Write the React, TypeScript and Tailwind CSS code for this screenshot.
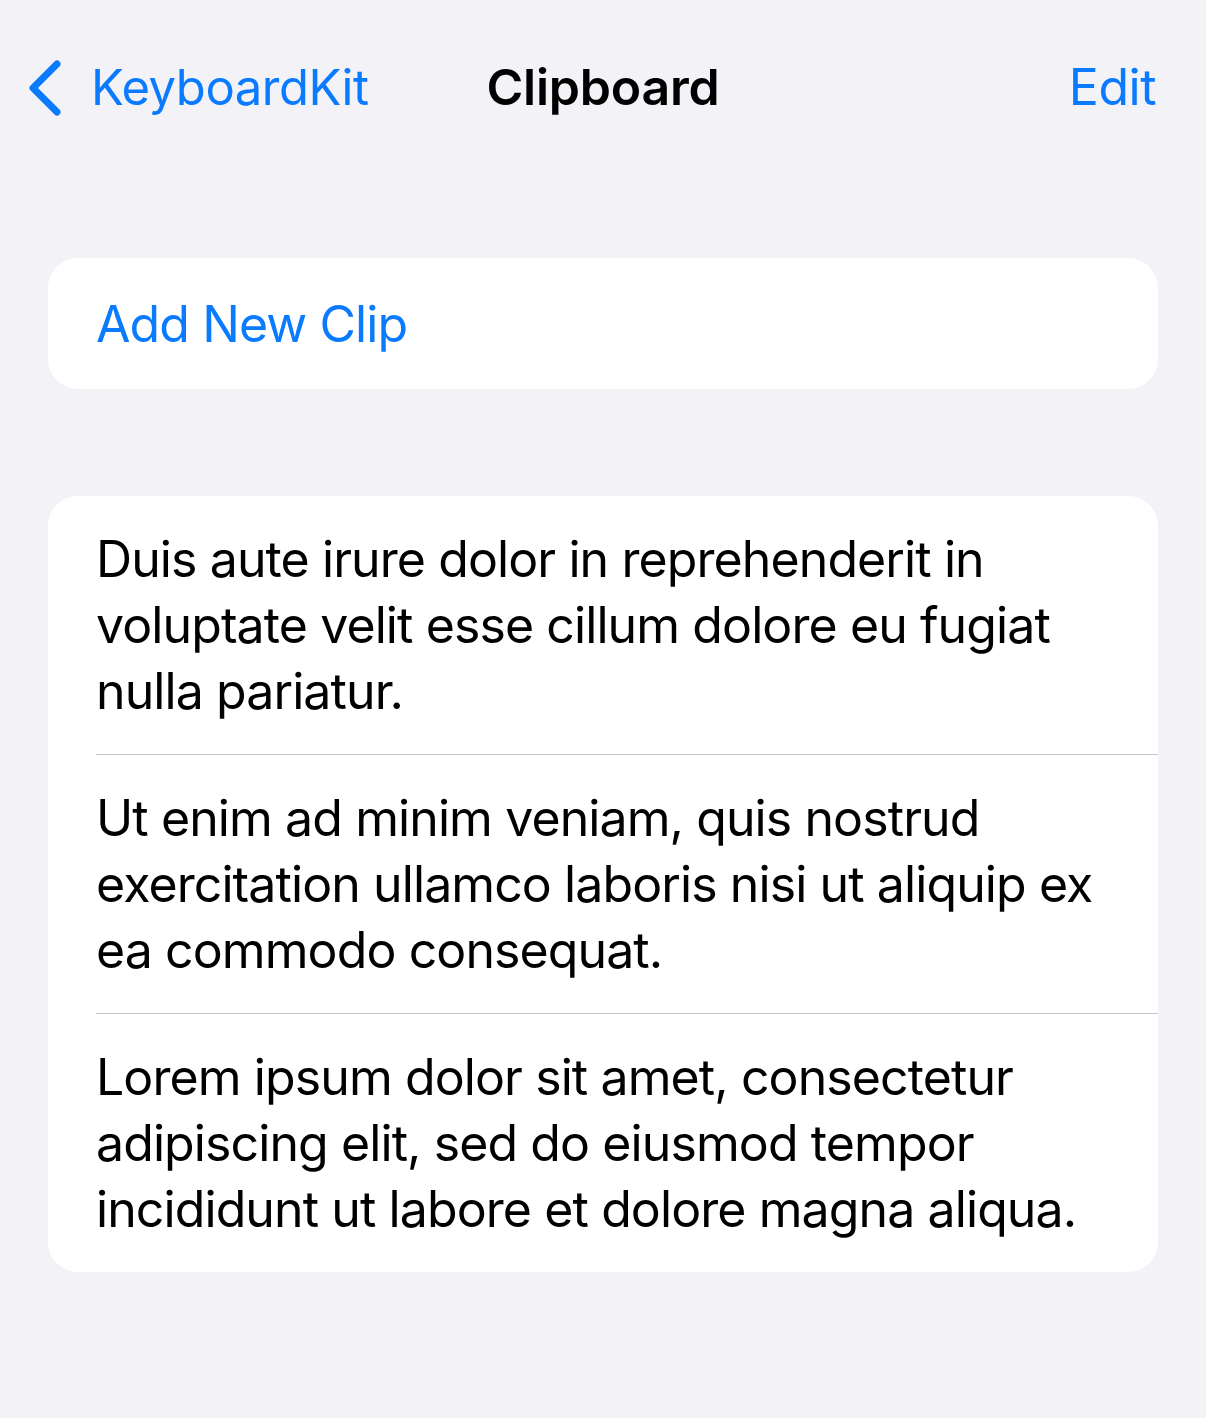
const clips = [
  ['Duis aute irure dolor in reprehenderit in', 'voluptate velit esse cillum dolore eu fugiat', 'nulla pariatur.'],
  ['Ut enim ad minim veniam, quis nostrud', 'exercitation ullamco laboris nisi ut aliquip ex', 'ea commodo consequat.'],
  ['Lorem ipsum dolor sit amet, consectetur', 'adipiscing elit, sed do eiusmod tempor', 'incididunt ut labore et dolore magna aliqua.'],
]

export default function App() {
  return (
    <div
      className="min-h-[1418px] w-full bg-[#f2f2f7] pt-[50px] text-black"
      style={{ fontFamily: 'Inter, "Noto Sans", sans-serif' }}
    >
      {/* Navigation bar */}
      <header className="grid h-[74px] grid-cols-[1fr_auto_1fr] items-center">
        <button className="flex items-center gap-[27px] pl-[26px] text-[49px] tracking-[-0.5px] text-[#0a7aff]">
          <svg width="38" height="58" viewBox="0 0 38 58" fill="none">
            <path d="M31 5 L7 29 L31 53" stroke="#0a7aff" strokeWidth="7" strokeLinecap="round" strokeLinejoin="round" />
          </svg>
          <span>KeyboardKit</span>
        </button>
        <h1 className="text-[50px] font-semibold tracking-[-0.2px]">Clipboard</h1>
        <button className="justify-self-end pr-[50px] text-[50px] tracking-[-0.5px] text-[#0a7aff]">Edit</button>
      </header>

      <main className="mx-[48px] mt-[134px] flex flex-col gap-[107px]">
        <div className="rounded-[30px] bg-white pl-[48px] pt-[33px] pb-[32px] text-[50px] leading-[66px] tracking-[-0.9px] text-[#0a7aff]">
          Add New Clip
        </div>

        <div className="overflow-hidden rounded-[30px] bg-white pl-[48px]">
          {clips.map((lines, i) => (
            <div
              key={i}
              className={`py-[30px] text-[50px] leading-[66px] tracking-[-0.9px] ${
                i > 0 ? 'border-t border-[#c6c6c8]' : ''
              }`}
            >
              {lines.map((l) => (
                <div key={l} className="whitespace-nowrap">{l}</div>
              ))}
            </div>
          ))}
        </div>
      </main>
    </div>
  )
}
